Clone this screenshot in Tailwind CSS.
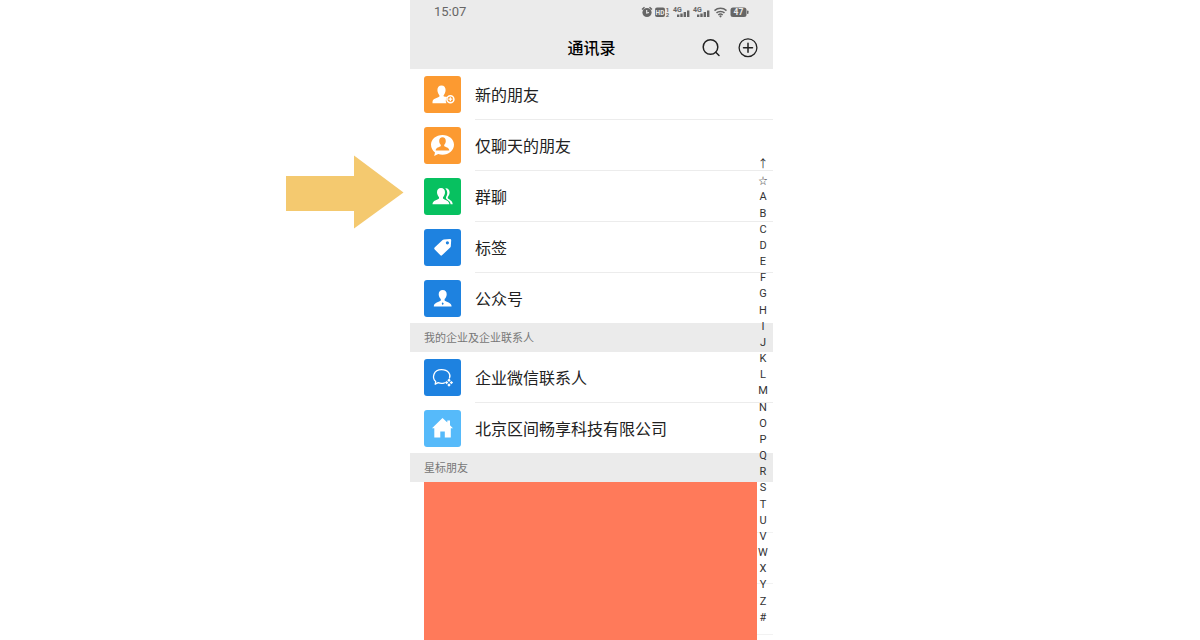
<!DOCTYPE html>
<html lang="zh-CN">
<head>
    <meta charset="UTF-8">
    <meta name="viewport" content="width=device-width, initial-scale=1.0">
    <title>通讯录</title>
    <script src="https://cdn.jsdelivr.net/npm/@tailwindcss/browser@4"></script>
</head>
<body class="bg-white text-[#222] font-['Roboto','Noto_Sans_CJK_SC',sans-serif]">
    <div class="flex justify-center h-screen overflow-hidden pr-[17px]">
        <div class="relative flex flex-col w-full max-w-[363px]">
            <!-- Pointer arrow -->
            <svg class="absolute top-[155px] right-full mr-[6px] w-[118px] h-[74px]" viewBox="0 0 118 74" fill="#f4c96f" aria-hidden="true">
                <path d="M0 21H68V0.500L117.500 37.500L68 73.500V56H0Z"></path>
            </svg>

            <!-- Header -->
            <header class="bg-[#ebebeb] h-[69px] shrink-0">
                <div class="flex items-center justify-between h-6 pl-6 pr-6">
                    <span class="text-[13px] leading-6 text-[#666]">15:07</span>
                    <svg class="w-[108px] h-3" viewBox="0 0 108 12" fill="#666" aria-hidden="true">
                        <!-- alarm -->
                        <circle cx="6" cy="6.500" r="4.600"></circle>
                        <path d="M1 3.500L3.500 1.300M11 3.500L8.500 1.300" stroke="#666" stroke-width="1.500"></path>
                        <path d="M5.700 4V7L8 6.500" stroke="#ebebeb" stroke-width="1.100" fill="none"></path>
                        <!-- HD -->
                        <rect x="14" y="1.500" width="10" height="9.500" rx="2"></rect>
                        <text x="19" y="8.700" font-size="6.500" font-weight="700" text-anchor="middle" fill="#ebebeb">HD</text>
                        <text x="24.800" y="5.500" font-size="6" font-weight="700">1</text>
                        <text x="24.800" y="11.200" font-size="6" font-weight="700">2</text>
                        <!-- signals -->
                        <text x="32" y="5.800" font-size="7" font-weight="700">4G</text>
                        <path d="M36 8.500h2.400V11h-2.400zM39.300 7.500h2.400V11h-2.400zM42.600 6h2.400v5h-2.400zM46 4.500h2.400V11h-2.400z"></path>
                        <text x="52" y="5.800" font-size="7" font-weight="700">4G</text>
                        <path d="M56 8.500h2.400V11h-2.400zM59.300 7.500h2.400V11h-2.400zM62.600 6h2.400v5h-2.400zM66 4.500h2.400V11h-2.400z"></path>
                        <!-- wifi -->
                        <path d="M73.500 4.600C77 1.600 82 1.600 85.500 4.600M75.500 6.900C77.500 4.900 81.500 4.900 83.500 6.900M77.300 9C78.500 7.900 80.500 7.900 81.700 9" stroke="#666" stroke-width="1.500" fill="none"></path>
                        <circle cx="79.500" cy="10.300" r="1.100"></circle>
                        <!-- battery -->
                        <rect x="89.500" y="1.500" width="16" height="9.500" rx="2.500"></rect>
                        <rect x="106" y="4.500" width="1.500" height="3.500" rx="0.700"></rect>
                        <text x="97.500" y="9.300" font-size="8.500" font-weight="700" text-anchor="middle" fill="#ebebeb">47</text>
                    </svg>
                </div>
                <div class="grid grid-cols-3 items-center h-12 pr-[14px]">
                    <h1 class="col-start-2 pl-[14px] pt-[2px] text-center text-base leading-6 font-medium text-black">通讯录</h1>
                    <div class="flex justify-end gap-4">
                        <button type="button" aria-label="搜索">
                            <svg class="w-5 h-5" viewBox="0 0 20 20" fill="none" stroke="#222" stroke-width="1.500" stroke-linecap="round">
                                <circle cx="9.500" cy="9" r="7.300"></circle>
                                <path d="M14.800 14.300L18 17.500"></path>
                            </svg>
                        </button>
                        <button type="button" aria-label="添加">
                            <svg class="w-[22px] h-[22px]" viewBox="0 0 22 22" fill="none" stroke="#222" stroke-width="1.300" stroke-linecap="round">
                                <circle cx="11" cy="10.700" r="8.900"></circle>
                                <path d="M11 6.200V15.200M6.500 10.700H15.500" stroke-width="1.500"></path>
                            </svg>
                        </button>
                    </div>
                </div>
            </header>

            <main class="flex flex-col flex-1 min-h-0 text-base leading-6">
                <!-- Entries -->
                <nav class="shrink-0">
                    <a href="#new" class="group flex items-center pl-[14px] gap-[14px]">
                        <svg class="w-[37px] h-[37px] rounded-[3px] bg-[#fc9a31]" viewBox="0 0 37 37" fill="#fff">
                            <path d="M17.500 9.500C14.800 9.500 13.400 11.400 13.400 14C13.400 16.300 14.400 18 15.400 19.200V20.600C13.800 22 8.500 22.600 8.500 26V27.300H22.500C21.300 25.300 21.600 22.500 23.300 20.900C21.700 20.600 20 21 19.600 20.300V19.200C20.600 18 21.600 16.300 21.600 14C21.600 11.400 20.200 9.500 17.500 9.500Z"></path>
                            <circle cx="26.400" cy="23.200" r="3.500" fill="none" stroke="#fff" stroke-width="1.500"></circle>
                            <path d="M26.400 21.200V25.200M24.400 23.200H28.400" stroke="#fff" stroke-width="1.300"></path>
                        </svg>
                        <span class="flex items-center flex-1 h-[51px] pt-1 border-b border-[#ececec] group-last:border-0 group-last:h-[50px]">新的朋友</span>
                    </a>
                    <a href="#chat-only" class="group flex items-center pl-[14px] gap-[14px]">
                        <svg class="w-[37px] h-[37px] rounded-[3px] bg-[#fc9a31]" viewBox="0 0 37 37" fill="#fff">
                            <path d="M18.500 8C12 8 7 12.300 7 17.800C7 21 8.600 23.700 11 25.400L10.200 29L14.200 27.100C15.500 27.500 17 27.700 18.500 27.700C25 27.700 30 23.300 30 17.800C30 12.300 25 8 18.500 8Z"></path>
                            <path fill="#fc9a31" d="M18.500 10.300C16.400 10.300 15.200 11.800 15.200 13.900C15.200 15.600 16 16.900 16.800 17.800V19C15.600 20.200 11.700 20.500 11.700 23.500H25.300C25.300 20.500 21.400 20.200 20.200 19V17.800C21 16.900 21.800 15.600 21.800 13.900C21.800 11.800 20.600 10.300 18.500 10.300Z"></path>
                        </svg>
                        <span class="flex items-center flex-1 h-[51px] pt-1 border-b border-[#ececec] group-last:border-0 group-last:h-[50px]">仅聊天的朋友</span>
                    </a>
                    <a href="#groups" class="group flex items-center pl-[14px] gap-[14px]">
                        <svg class="w-[37px] h-[37px] rounded-[3px] bg-[#07c160]" viewBox="0 0 37 37" fill="#fff">
                            <path d="M21.300 10.300C24 10 25.600 12 25.600 14.300C25.600 16.500 24.700 18 23.800 19V20.300C25 21.800 28.700 22.500 28.700 26.200H26.600C26.300 22.500 23 22.300 22 20.500V19C23.400 17 24.200 13.500 21.300 10.300Z"></path>
                            <path d="M17 10C14.400 10 13 11.800 13 14.300C13 16.500 14 18.100 15 19.200V20.600C13.600 22 8.500 22.600 8.500 26.200H25.300C25.300 22.600 20.400 22 19 20.600V19.200C20 18.100 21 16.500 21 14.300C21 11.800 19.600 10 17 10Z"></path>
                        </svg>
                        <span class="flex items-center flex-1 h-[51px] pt-1 border-b border-[#ececec] group-last:border-0 group-last:h-[50px]">群聊</span>
                    </a>
                    <a href="#tags" class="group flex items-center pl-[14px] gap-[14px]">
                        <svg class="w-[37px] h-[37px] rounded-[3px] bg-[#1e82e0]" viewBox="0 0 37 37" fill="#fff">
                            <path fill-rule="evenodd" d="M19.800 10.500L26 10Q27.300 10 27.200 11.300L26.800 17.300Q26.700 18 26.200 18.500L18 26.300Q17.200 27 16.400 26.200L10.500 20.200Q9.800 19.400 10.600 18.600L18.600 11.100Q19.200 10.600 19.800 10.500ZM23.400 12.200A1.600 1.600 0 1 0 23.400 15.400A1.600 1.600 0 1 0 23.400 12.200Z"></path>
                        </svg>
                        <span class="flex items-center flex-1 h-[51px] pt-1 border-b border-[#ececec] group-last:border-0 group-last:h-[50px]">标签</span>
                    </a>
                    <a href="#official" class="group flex items-center pl-[14px] gap-[14px]">
                        <svg class="w-[37px] h-[37px] rounded-[3px] bg-[#1e82e0]" viewBox="0 0 37 37" fill="#fff">
                            <path d="M18.700 10C16.100 10 14.700 11.800 14.700 14.200C14.700 16.300 15.700 17.900 16.800 19V20.500C15.400 22 9.800 22.300 9.800 26.500H27.600C27.600 22.300 22 22 20.600 20.500V19C21.700 17.900 22.700 16.300 22.700 14.200C22.700 11.800 21.300 10 18.700 10Z"></path>
                            <path fill="#1e82e0" d="M18.700 22.300L19.700 23.500L18.700 25.200L17.700 23.500Z"></path>
                        </svg>
                        <span class="flex items-center flex-1 h-[51px] pt-1 border-b border-[#ececec] group-last:border-0 group-last:h-[50px]">公众号</span>
                    </a>
                </nav>

                <!-- Company contacts -->
                <h2 class="flex items-center shrink-0 h-[29px] pl-[14px] pt-[2px] bg-[#ebebeb] text-[11px] text-[#777]">我的企业及企业联系人</h2>
                <nav class="shrink-0">
                    <a href="#wecom" class="group flex items-center pl-[14px] gap-[14px]">
                        <svg class="w-[37px] h-[37px] rounded-[3px] bg-[#1e82e0]" viewBox="0 0 37 37" fill="none" stroke="#fff" stroke-width="1.300">
                            <path d="M20.500 23.800C19.500 24.200 16 24.400 14.200 23.700L11.200 25.200L11.700 22.500C7.500 19 9.500 10.700 17.500 10.700C24.500 10.700 27 15.500 25.500 19" stroke-linecap="round" stroke-linejoin="round"></path>
                            <path d="M25 19.500L26.700 21.200L25 22.900L23.300 21.200ZM27.400 21.900L29.100 23.600L27.400 25.300L25.700 23.600ZM25 24.300L26.700 26L25 27.700L23.300 26ZM22.600 21.900L24.300 23.600L22.600 25.300L20.900 23.600Z" fill="#fff" stroke="none"></path>
                        </svg>
                        <span class="flex items-center flex-1 h-[51px] pt-1 border-b border-[#ececec] group-last:border-0 group-last:h-[50px]">企业微信联系人</span>
                    </a>
                    <a href="#company" class="group flex items-center pl-[14px] gap-[14px]">
                        <svg class="w-[37px] h-[37px] rounded-[3px] bg-[#56bafa]" viewBox="0 0 37 37" fill="#fff">
                            <path d="M18.500 8L23.300 12.600V10.500H26V15.200L29 18.200H26.800V27.500H20.800V21.500H16.300V27.500H10.300V18.200H8Z"></path>
                        </svg>
                        <span class="flex items-center flex-1 h-[51px] pt-1 border-b border-[#ececec] group-last:border-0 group-last:h-[50px]">北京区间畅享科技有限公司</span>
                    </a>
                </nav>

                <!-- Starred friends, covered by a solid block -->
                <h2 class="flex items-center shrink-0 h-[29px] pl-[14px] pt-[2px] bg-[#ebebeb] text-[11px] text-[#777]">星标朋友</h2>
                <div class="flex flex-1 min-h-0 pl-[14px]">
                    <div class="flex-1 bg-[#ff7a5a]"></div>
                    <div class="w-4 overflow-hidden">
                        <div class="h-[51px] border-b border-[#f2f2f2]"></div>
                        <div class="h-[51px] border-b border-[#f2f2f2]"></div>
                        <div class="h-[51px] border-b border-[#f2f2f2]"></div>
                    </div>
                </div>
            </main>

            <!-- Letter index -->
            <nav class="absolute top-[157px] right-[2px] flex flex-col justify-between items-center w-4 h-[469px] text-[11px] leading-4 text-[#333]" aria-label="索引">
                <a href="#top">↑</a>
                <a href="#star" class="text-[9px]">☆</a>
                <a href="#A">A</a>
                <a href="#B">B</a>
                <a href="#C">C</a>
                <a href="#D">D</a>
                <a href="#E">E</a>
                <a href="#F">F</a>
                <a href="#G">G</a>
                <a href="#H">H</a>
                <a href="#I">I</a>
                <a href="#J">J</a>
                <a href="#K">K</a>
                <a href="#L">L</a>
                <a href="#M">M</a>
                <a href="#N">N</a>
                <a href="#O">O</a>
                <a href="#P">P</a>
                <a href="#Q">Q</a>
                <a href="#R">R</a>
                <a href="#S">S</a>
                <a href="#T">T</a>
                <a href="#U">U</a>
                <a href="#V">V</a>
                <a href="#W">W</a>
                <a href="#X">X</a>
                <a href="#Y">Y</a>
                <a href="#Z">Z</a>
                <a href="#hash">#</a>
            </nav>
        </div>
    </div>
</body>
</html>
